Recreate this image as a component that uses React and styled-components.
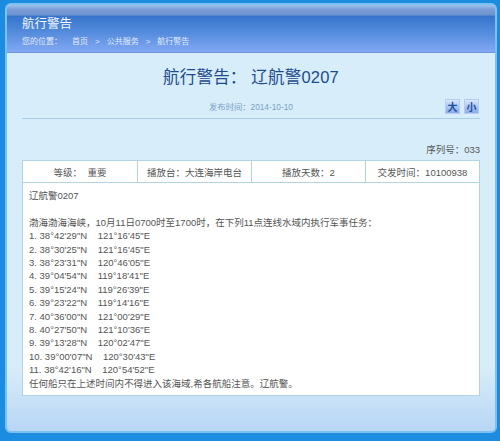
import React from "react";
import styled, { createGlobalStyle } from "styled-components";

const Global = createGlobalStyle`
  html, body { margin: 0; padding: 0; }
  body {
    background: #1b8ce0;
    font-family: "Liberation Sans", "Noto Sans CJK SC", sans-serif;
    width: 500px;
    height: 441px;
    overflow: hidden;
  }
`;

const Frame = styled.div`
  margin: 3px 3px 0 5px;
  height: 430px;
  box-sizing: border-box;
  border: 2px solid #7cc0f0;
  border-radius: 6px;
  overflow: hidden;
  display: flex;
  flex-direction: column;
  background: linear-gradient(to bottom, #d7edf9 0%, #d7edf9 85%, #b7d6f5 100%);
`;

const Header = styled.div`
  height: 48px;
  box-sizing: border-box;
  padding: 9px 15px 0;
  background: linear-gradient(
    to bottom,
    #9cc3ee 0px,
    #7b9fd6 4px,
    #6c93d0 10px,
    #3674cb 11px,
    #4c86d8 50%,
    #82a9f3 100%
  );
  border-bottom: 1px solid #7492d6;
  color: #fff;
`;

const HeaderTitle = styled.div`
  font-size: 12.5px;
  line-height: 20px;
  color: #f4f7fc;
`;

const Crumbs = styled.div`
  margin-top: 2px;
  font-size: 8px;
  line-height: 12px;
  color: #e3ebf9;
  display: flex;
  gap: 7px;
  white-space: pre;
`;

const Here = styled.span`
  margin-right: 3px;
`;

const Body = styled.div`
  flex: 1;
  padding: 12px 15px 0;
  display: flex;
  flex-direction: column;
`;

const Title = styled.h1`
  margin: 0;
  text-align: center;
  font-size: 16.5px;
  line-height: 24px;
  font-weight: normal;
  color: #1d4b8d;
  letter-spacing: 0.2px;
`;

const DateRow = styled.div`
  margin-top: 9px;
  display: grid;
  grid-template-columns: 1fr auto 1fr;
  align-items: center;
  height: 16px;
  padding-bottom: 4px;
  border-bottom: 1px solid #a9cde8;
`;

const DateText = styled.div`
  grid-column: 2;
  font-size: 8.3px;
  color: #7b9fc6;
`;

const SizeButtons = styled.div`
  grid-column: 3;
  justify-self: end;
  display: flex;
  gap: 4px;
  margin-right: 1px;
`;

const SizeBtn = styled.span`
  width: 15px;
  height: 15px;
  display: flex;
  align-items: center;
  justify-content: center;
  font-size: 10px;
  font-weight: bold;
  color: #1e4c9e;
  background: linear-gradient(to bottom, #dbe8fb 0%, #a9c4f0 55%, #89abe8 100%);
  border: 1px solid #b8cdee;
  box-sizing: border-box;
`;

const Serial = styled.div`
  margin-top: 24px;
  text-align: right;
  font-size: 9.5px;
  line-height: 14px;
  color: #555;
`;

const Table = styled.div`
  margin-top: 3px;
  background: #fff;
  border: 1px solid #b3d2e4;
`;

const InfoRow = styled.div`
  display: grid;
  grid-template-columns: repeat(4, 1fr);
  height: 21px;
  border-bottom: 1px solid #b3d2e4;
`;

const InfoCell = styled.div`
  display: flex;
  align-items: center;
  justify-content: center;
  font-size: 9.5px;
  color: #555;
  white-space: pre;
  border-left: ${(p) => (p.$first ? "none" : "1px solid #b3d2e4")};
`;

const Content = styled.div`
  padding: 6px 6px 5px;
  font-size: 9.5px;
  line-height: 13.4px;
  color: #555;
`;

const Line = styled.div`
  white-space: pre;
  min-height: 13.4px;
`;

const coords = [
  ["38°42'29\"N", "121°16'45\"E"],
  ["38°30'25\"N", "121°16'45\"E"],
  ["38°23'31\"N", "120°46'05\"E"],
  ["39°04'54\"N", "119°18'41\"E"],
  ["39°15'24\"N", "119°26'39\"E"],
  ["39°23'22\"N", "119°14'16\"E"],
  ["40°36'00\"N", "121°00'29\"E"],
  ["40°27'50\"N", "121°10'36\"E"],
  ["39°13'28\"N", "120°02'47\"E"],
  ["39°00'07\"N", "120°30'43\"E"],
  ["38°42'16\"N", "120°54'52\"E"],
];

export default function App() {
  return (
    <>
      <Global />
      <Frame>
        <Header>
          <HeaderTitle>航行警告</HeaderTitle>
          <Crumbs>
            <Here>您的位置：</Here>
            <span>首页</span>
            <span>&gt;</span>
            <span>公共服务</span>
            <span>&gt;</span>
            <span>航行警告</span>
          </Crumbs>
        </Header>
        <Body>
          <Title>航行警告： 辽航警0207</Title>
          <DateRow>
            <DateText>发布时间：2014-10-10</DateText>
            <SizeButtons>
              <SizeBtn>大</SizeBtn>
              <SizeBtn>小</SizeBtn>
            </SizeButtons>
          </DateRow>
          <Serial>序列号：033</Serial>
          <Table>
            <InfoRow>
              <InfoCell $first>等级：  重要</InfoCell>
              <InfoCell>播放台：大连海岸电台</InfoCell>
              <InfoCell>播放天数：2</InfoCell>
              <InfoCell>交发时间：10100938</InfoCell>
            </InfoRow>
            <Content>
              <Line>辽航警0207</Line>
              <Line> </Line>
              <Line>渤海渤海海峡，10月11日0700时至1700时，在下列11点连线水域内执行军事任务：</Line>
              {coords.map(([n, e], i) => (
                <Line key={i}>{`${i + 1}. ${n}    ${e}`}</Line>
              ))}
              <Line>任何船只在上述时间内不得进入该海域,希各航船注意。辽航警。</Line>
            </Content>
          </Table>
        </Body>
      </Frame>
    </>
  );
}
